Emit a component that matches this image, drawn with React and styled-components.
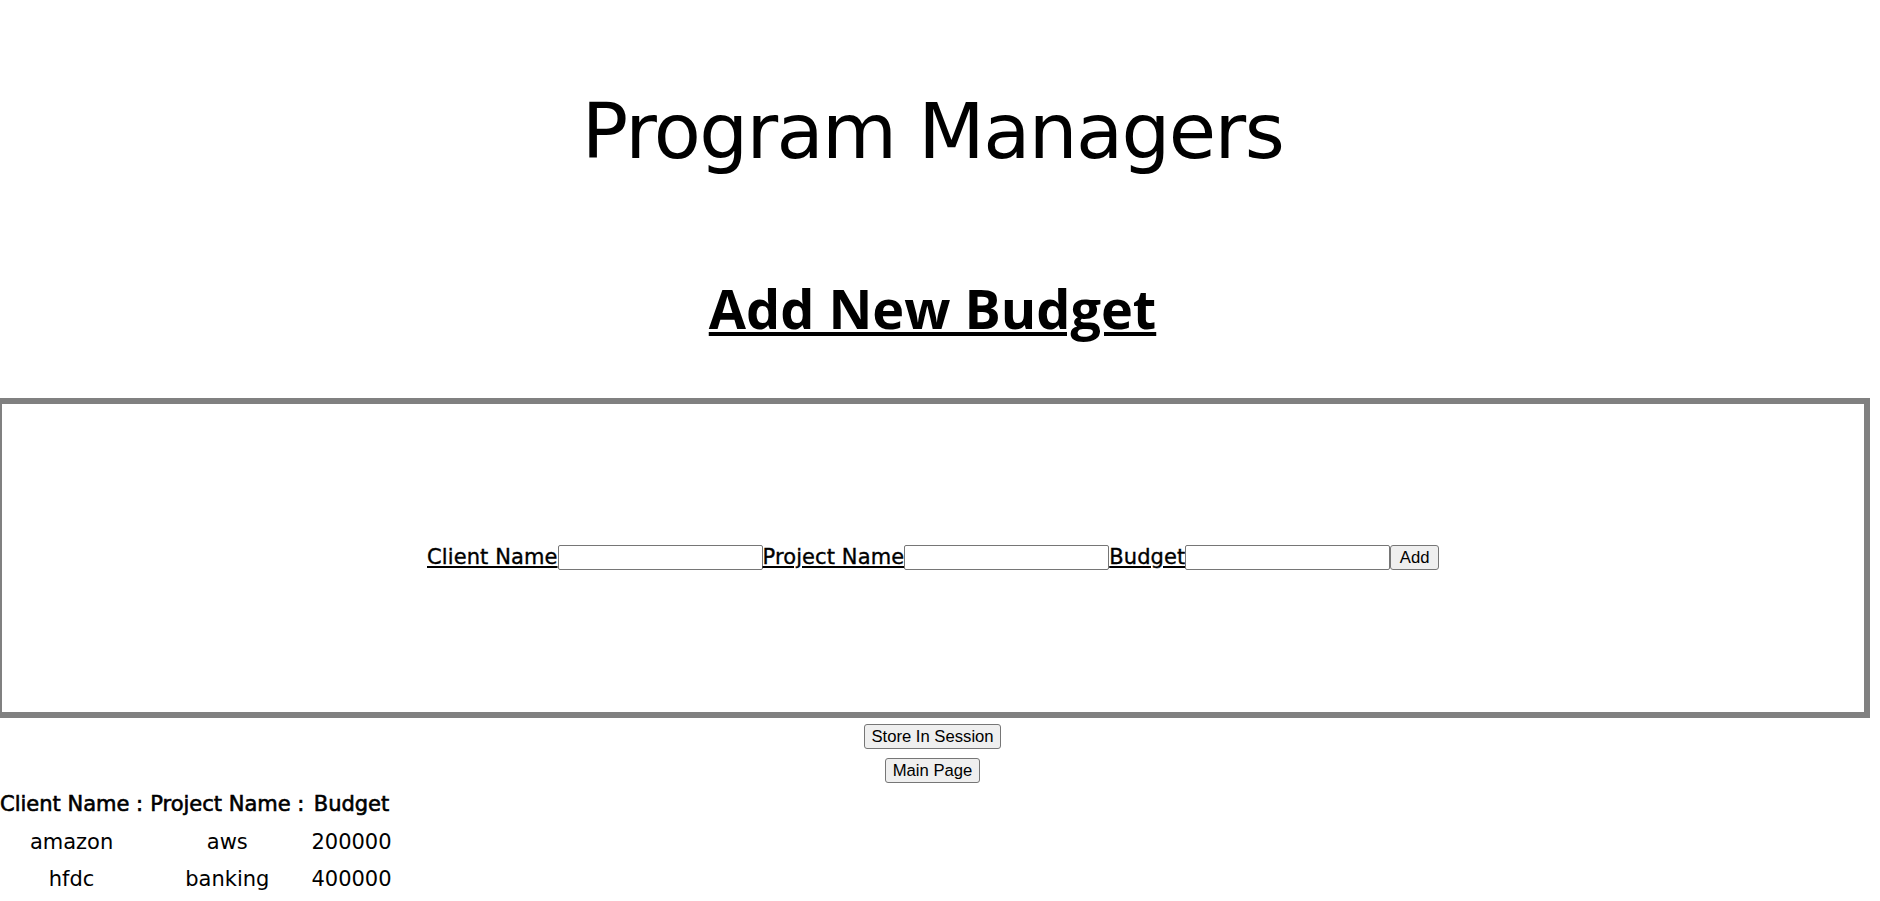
import React from "react";
import styled, { createGlobalStyle } from "styled-components";

const GlobalStyle = createGlobalStyle`
  html, body {
    margin: 0;
    padding: 0;
    background: #ffffff;
  }
  body {
    font-family: "DejaVu Sans", "Liberation Sans", sans-serif;
    color: #000;
  }
`;

const Page = styled.div`
  width: 1865px;
`;

const Title = styled.h1`
  margin: 87px 0 0;
  font-family: "DejaVu Sans", sans-serif;
  font-size: 77px;
  line-height: 90px;
  font-weight: 400;
  letter-spacing: -1.6px;
  text-align: center;
`;

const Heading = styled.h2`
  margin: 94px 0 52px;
  font-family: "Open Sans", "Noto Sans", sans-serif;
  font-size: 54px;
  line-height: 75px;
  font-weight: 700;
  text-align: center;
  text-decoration: underline;
  text-decoration-thickness: 4px;
  text-underline-offset: 3px;
`;

const FormBox = styled.section`
  box-sizing: border-box;
  width: calc(100% + 9px);
  height: 320px;
  margin-left: -4px;
  border: 6px solid #808080;
  display: flex;
  align-items: center;
  justify-content: center;
`;

const FormRow = styled.form`
  display: flex;
  align-items: center;
  margin: -1px 0 0;
`;

const Label = styled.label`
  font-size: 21px;
  line-height: 25px;
  letter-spacing: 0.1px;
  -webkit-text-stroke: 0.35px #000;
  text-decoration: underline;
  text-decoration-thickness: 2px;
  text-underline-offset: 2px;
`;

const TextInput = styled.input`
  box-sizing: border-box;
  width: 205px;
  height: 25px;
  margin: 0;
  padding: 1px 3px;
  border: 1px solid #767676;
  border-radius: 2px;
  background: #fff;
  font-family: "Liberation Sans", sans-serif;
  font-size: 16.67px;
`;

const Button = styled.button`
  box-sizing: border-box;
  height: 25px;
  margin: 0;
  padding: 0 ${(p) => (p.$wide ? "8.5px" : "6.5px")};
  border: 1px solid #767676;
  border-radius: 3px;
  background: #efefef;
  color: #000;
  font-family: "Liberation Sans", Arial, sans-serif;
  font-size: 16.67px;
  line-height: 23px;
  cursor: pointer;
`;

const ButtonStack = styled.div`
  display: flex;
  flex-direction: column;
  align-items: center;
  gap: 9px;
  margin-top: 6px;
`;

const BudgetTable = styled.div`
  display: grid;
  grid-template-columns: repeat(3, auto);
  justify-content: start;
  justify-items: center;
  column-gap: 7px;
  grid-auto-rows: 37.5px;
  margin-top: 3px;
  font-size: 21px;
  line-height: 37.5px;
`;

const HeadCell = styled.div`
  white-space: nowrap;
  -webkit-text-stroke: 0.6px #000;
`;

const Cell = styled.div`
  white-space: nowrap;
`;

const rows = [
  { client: "amazon", project: "aws", budget: "200000" },
  { client: "hfdc", project: "banking", budget: "400000" },
];

export default function App() {
  return (
    <>
      <GlobalStyle />
      <Page>
        <Title>Program Managers</Title>
        <Heading>Add New Budget</Heading>
        <FormBox>
          <FormRow onSubmit={(e) => e.preventDefault()}>
            <Label htmlFor="client">Client Name</Label>
            <TextInput id="client" type="text" />
            <Label htmlFor="project">Project Name</Label>
            <TextInput id="project" type="text" />
            <Label htmlFor="budget">Budget</Label>
            <TextInput id="budget" type="text" />
            <Button $wide type="submit">Add</Button>
          </FormRow>
        </FormBox>
        <ButtonStack>
          <Button type="button">Store In Session</Button>
          <Button type="button">Main Page</Button>
        </ButtonStack>
        <BudgetTable>
          <HeadCell>Client Name :</HeadCell>
          <HeadCell>Project Name :</HeadCell>
          <HeadCell>Budget</HeadCell>
          {rows.map((r) => (
            <React.Fragment key={r.client}>
              <Cell>{r.client}</Cell>
              <Cell>{r.project}</Cell>
              <Cell>{r.budget}</Cell>
            </React.Fragment>
          ))}
        </BudgetTable>
      </Page>
    </>
  );
}
